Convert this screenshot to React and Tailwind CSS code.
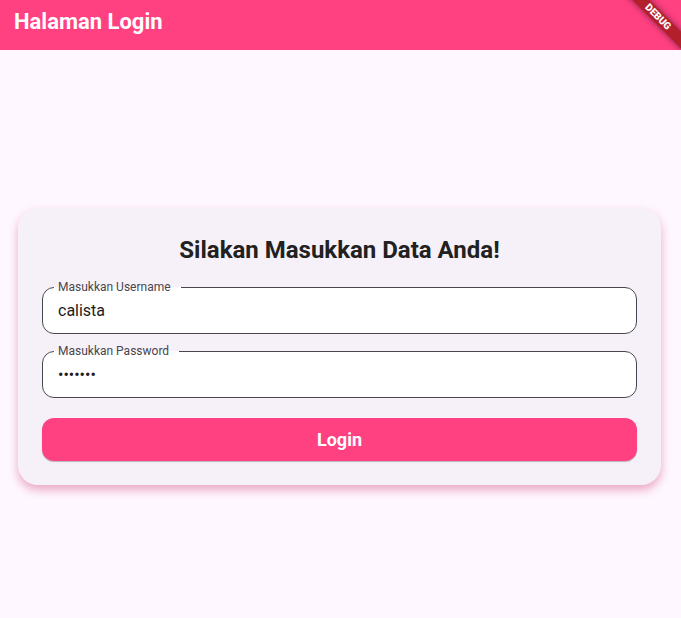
import { useState } from "react";

function OutlinedField({ id, label, type, value, onChange }) {
  return (
    <fieldset className="min-w-0 rounded-[12px] border border-[#49454f] bg-white">
      <legend className="ml-[11px] pr-2.5 pl-1 text-[12px] leading-4 text-[#49454f]">
        <label htmlFor={id} className="block">
          {label}
        </label>
      </legend>
      <input
        id={id}
        type={type}
        value={value}
        onChange={onChange}
        className="block h-[38px] w-full rounded-[12px] bg-transparent px-[15px] pb-2 text-[16px] text-[#1d1b20] outline-none"
      />
    </fieldset>
  );
}

function DebugBanner() {
  return (
    <div className="pointer-events-none absolute top-0 right-0 h-[50px] w-[60px] overflow-hidden">
      <div className="absolute top-[11px] left-[-5px] flex h-3 w-[84px] rotate-45 items-center justify-center bg-[#b3202c] text-[10px] leading-3 font-black text-white shadow-[0_0_6px_rgba(0,0,0,0.5)]">
        DEBUG
      </div>
    </div>
  );
}

export default function App() {
  const [username, setUsername] = useState("calista");
  const [password, setPassword] = useState("rahasia");

  return (
    <div className="relative flex min-h-screen flex-col bg-[#fef7ff] font-['Roboto',sans-serif]">
      <header className="flex h-[50px] items-center bg-[#ff4081] px-[14px] pb-[7px]">
        <h1 className="text-[22px] leading-7 font-bold text-white">Halaman Login</h1>
      </header>
      <main className="flex flex-1 items-center pt-[25px] pr-5 pl-[18px]">
        <form
          onSubmit={(event) => event.preventDefault()}
          className="flex w-full flex-col rounded-[20px] bg-[#f6f1f8] p-6 shadow-[0_5px_10px_rgba(200,27,90,0.35)]"
        >
          <h2 className="mb-[11px] text-center text-[24px] leading-9 font-bold text-[#212121]">
            Silakan Masukkan Data Anda!
          </h2>
          <div className="mb-5 flex flex-col gap-[9px]">
            <OutlinedField
              id="username"
              label="Masukkan Username"
              type="text"
              value={username}
              onChange={(event) => setUsername(event.target.value)}
            />
            <OutlinedField
              id="password"
              label="Masukkan Password"
              type="password"
              value={password}
              onChange={(event) => setPassword(event.target.value)}
            />
          </div>
          <button
            type="submit"
            className="h-[43px] rounded-[12px] bg-[#ff4081] text-[18px] font-bold text-white shadow-[0_1px_1px_rgba(0,0,0,0.25)]"
          >
            Login
          </button>
        </form>
      </main>
      <DebugBanner />
    </div>
  );
}
